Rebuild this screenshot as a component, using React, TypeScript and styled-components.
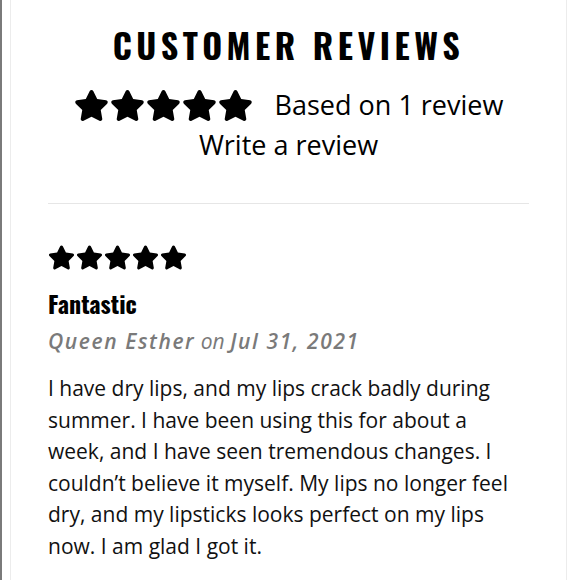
import styled, { createGlobalStyle } from "styled-components"
import { FaStar } from "react-icons/fa"

const GlobalStyle = createGlobalStyle`
    html, body {
        margin: 0;
        padding: 0;
        background: #ffffff;
    }
`

const review = {
    title: "Fantastic",
    author: "Queen Esther",
    date: "Jul 31, 2021",
    rating: 5,
    body: "I have dry lips, and my lips crack badly during summer. I have been using this for about a week, and I have seen tremendous changes. I couldn’t believe it myself. My lips no longer feel dry, and my lipsticks looks perfect on my lips now. I am glad I got it."
}

const Stars = ({ count, size }: { count: number, size: number }) => (
    <StarRow>
        {Array.from({ length: count }).map((_, i) => <FaStar key={i} size={size} />)}
    </StarRow>
)

export default function App() {
    return (
        <Page>
            <GlobalStyle />
            <Card>
                <Header>
                    <Title>Customer Reviews</Title>
                    <Summary>
                        <Stars count={5} size={35} />
                        <SummaryText>Based on 1 review</SummaryText>
                    </Summary>
                    <WriteLink>Write a review</WriteLink>
                </Header>
                <Divider />
                <Review>
                    <Stars count={review.rating} size={27} />
                    <ReviewTitle>{review.title}</ReviewTitle>
                    <Byline>
                        <Strong>{review.author}</Strong> on <Strong>{review.date}</Strong>
                    </Byline>
                    <Body>{review.body}</Body>
                </Review>
            </Card>
        </Page>
    )
}

const Page = styled.div`
    display: flex;
    height: 580px;
    border-left: 2px solid #7a7a7a;
    padding-left: 8px;
    overflow: hidden;
`

const Card = styled.div`
    width: 557px;
    border-left: 1px solid #ececec;
    border-right: 1px solid #ececec;
    padding: 0 37px;
    box-sizing: border-box;
    color: #000000;
`

const Header = styled.div`
    display: flex;
    flex-direction: column;
    align-items: center;
    padding-top: 22px;
    padding-bottom: 40px;
`

const Title = styled.h1`
    margin: 0;
    font-family: "Oswald", "Liberation Sans Narrow", "DejaVu Sans Condensed", sans-serif;
    font-weight: 700;
    font-size: 34px;
    line-height: 45px;
    letter-spacing: 4.5px;
    text-transform: uppercase;
`

const StarRow = styled.div`
    display: flex;
    align-items: center;
    gap: 1px;
    color: #000000;
`

const Summary = styled.div`
    display: flex;
    align-items: center;
    gap: 22px;
    margin-top: 20px;
`

const SummaryText = styled.span`
    font-family: "Open Sans", sans-serif;
    font-size: 27px;
    line-height: 36px;
`

const WriteLink = styled.a`
    font-family: "Open Sans", sans-serif;
    font-size: 27px;
    line-height: 36px;
    color: #000000;
    text-decoration: none;
    margin-top: 4px;
`

const Divider = styled.hr`
    margin: 0;
    border: 0;
    border-top: 1px solid #e6e6e6;
`

const Review = styled.div`
    display: flex;
    flex-direction: column;
    align-items: flex-start;
    padding-top: 40px;
`

const ReviewTitle = styled.h3`
    margin: 17px 0 0;
    font-family: "Oswald", "Liberation Sans Narrow", "DejaVu Sans Condensed", sans-serif;
    font-weight: 700;
    font-size: 24px;
    line-height: 30px;
`

const Byline = styled.div`
    margin-top: 9px;
    font-family: "Open Sans", sans-serif;
    font-style: italic;
    font-size: 21px;
    line-height: 28px;
    color: #7a7a7a;
`

const Strong = styled.span`
    font-weight: 600;
    letter-spacing: 1.6px;
`

const Body = styled.p`
    max-width: 480px;
    margin: 18px 0 0;
    font-family: "Open Sans", sans-serif;
    font-size: 21px;
    line-height: 31.5px;
    color: #111111;
`
